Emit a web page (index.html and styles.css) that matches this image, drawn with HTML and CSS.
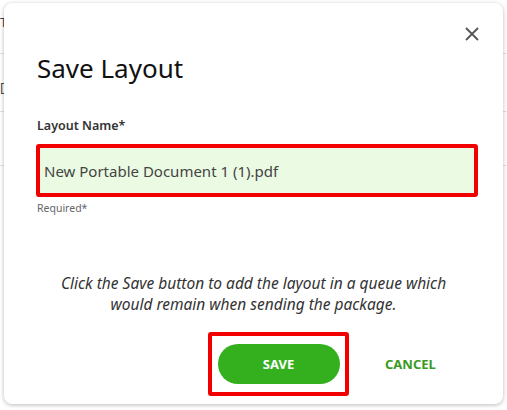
FILE: index.html
```html
<!DOCTYPE html>
<html>
	<head>
		<meta charset="UTF-8">
		<title>Save Layout</title>
		<link rel="stylesheet" href="styles.css">
	</head>
	<body>
		<div class="page">
			<div class="row row-top">T</div>
			<div class="row row-mid">[</div>
			<div class="row"></div>
		</div>

		<div class="overlay">
			<div class="dialog">
				<button class="close" aria-label="Close">
					<svg width="16" height="16" viewBox="0 0 16 16">
						<path d="M2 2 L14 14 M14 2 L2 14" stroke="#555" stroke-width="1.8" fill="none"/>
					</svg>
				</button>
				<h1 class="title">Save Layout</h1>

				<label class="label" for="layoutName">Layout Name*</label>
				<div class="mark mark-input">
					<input id="layoutName" class="input" type="text" value="New Portable Document 1 (1).pdf">
				</div>
				<div class="hint">Required*</div>

				<p class="note">Click the Save button to add the layout in a queue which would remain when sending the package.</p>

				<div class="actions">
					<div class="mark mark-btn">
						<button class="btn-save">SAVE</button>
					</div>
					<button class="btn-cancel">CANCEL</button>
				</div>
			</div>
		</div>
	</body>
</html>
```

FILE: styles.css
```css
html, body {
	margin: 0;
	padding: 0;
}

body {
	width: 507px;
	height: 410px;
	overflow: hidden;
	background: #fff;
	font-family: "Noto Sans", "Open Sans", sans-serif;
	color: #222;
	position: relative;
}

/* page behind the dialog */
.row {
	height: 53px;
	border-bottom: 1px solid #e2e2e2;
	font-size: 13px;
	color: #444;
	line-height: 44px;
}

.row-mid {
	height: 57px;
	line-height: 66px;
}

.overlay {
	position: absolute;
	left: 0;
	top: 0;
	right: 0;
	bottom: 0;
}

.dialog {
	position: absolute;
	left: 4px;
	top: 3px;
	width: 499px;
	height: 401px;
	box-sizing: border-box;
	background: #fff;
	border-radius: 8px;
	box-shadow: 0 1px 4px rgba(0, 0, 0, 0.28);
	padding: 49px 26px 0 32px;
}

.close {
	position: absolute;
	top: 20px;
	right: 20px;
	width: 22px;
	height: 22px;
	padding: 3px;
	border: 0;
	background: none;
	cursor: pointer;
}

.close svg {
	display: block;
}

.title {
	margin: 0 0 0 1px;
	font-size: 26px;
	font-weight: 400;
	line-height: 32px;
	color: #111;
}

.label {
	display: block;
	margin: 33px 0 0 1px;
	font-size: 12.5px;
	font-weight: 600;
	color: #333;
}

.mark {
	border: 4px solid #f20000;
	border-radius: 3px;
}

.mark-input {
	margin-top: 10px;
	width: 434px;
	height: 45px;
	background: #ebfbe3;
}

.input {
	width: 100%;
	height: 100%;
	box-sizing: border-box;
	border: 0;
	outline: 0;
	background: transparent;
	padding: 0 0 0 4px;
	font-family: inherit;
	font-size: 15px;
	color: #444;
}

.hint {
	margin: 4px 0 0 1px;
	font-size: 10.5px;
	color: #666;
}

.note {
	margin: 58px 0 0 0;
	padding: 0 23px 0 17px;
	text-align: center;
	font-style: italic;
	font-size: 15.5px;
	line-height: 21px;
	color: #333;
}

.actions {
	display: flex;
	align-items: center;
	margin: 17px 0 0 172px;
}

.mark-btn {
	width: 133px;
	height: 56px;
	display: flex;
	align-items: center;
	justify-content: center;
}

.btn-save {
	width: 122px;
	height: 40px;
	border: 0;
	border-radius: 20px;
	background: #34b01f;
	color: #fff;
	font-family: inherit;
	font-size: 13px;
	font-weight: 700;
	cursor: pointer;
}

.btn-cancel {
	margin-left: 36px;
	border: 0;
	background: none;
	color: #3a9a1f;
	font-family: inherit;
	font-size: 13px;
	font-weight: 700;
	cursor: pointer;
	padding: 0;
}
```
